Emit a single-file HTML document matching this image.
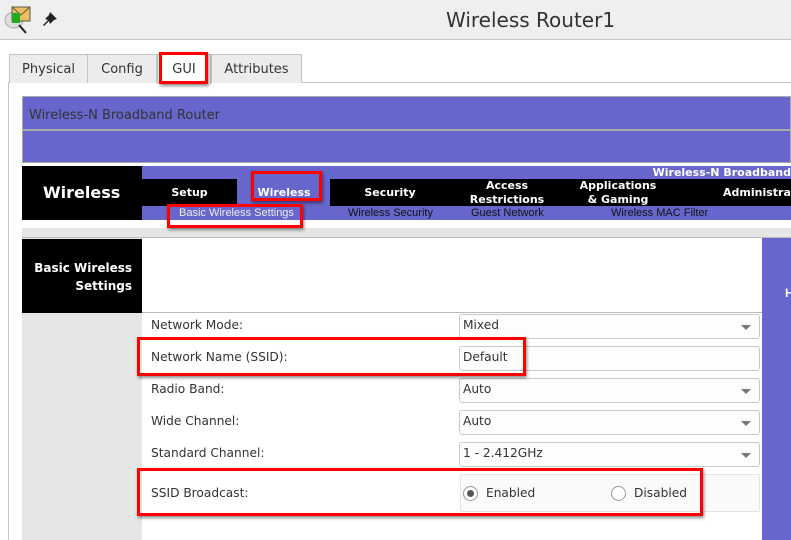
<!DOCTYPE html><html><head><style>
*{margin:0;padding:0;box-sizing:border-box}
body{width:791px;height:540px;overflow:hidden;background:#fff;font-family:"Liberation Sans",sans-serif;position:relative}
.a{position:absolute}
.ui{font-family:"DejaVu Sans","Liberation Sans",sans-serif}
.tab{position:absolute;top:54px;height:29px;border:1px solid #c4c4c4;border-bottom:none;background:#ececec;font-size:13px;color:#333;text-align:center;line-height:30px}
.red{position:absolute;border:3px solid #f00;box-shadow:1px 2px 3px rgba(0,0,0,.45)}
.lbl{position:absolute;left:151px;font-size:12.2px;color:#333}
.sel{position:absolute;left:459px;width:301px;height:25px;border:1px solid #c8c8c8;border-radius:3px;background:#fdfdfd;font-size:12.2px;color:#333;padding:3px 0 0 3px}
.sel.dd:after{content:"";position:absolute;right:8px;top:10px;border-left:5px solid transparent;border-right:5px solid transparent;border-top:5px solid #777}
.nav{position:absolute;color:#fff;font-weight:bold;font-size:11px;text-align:center;line-height:14px;font-family:"DejaVu Sans",sans-serif}
.sub{position:absolute;top:207px;font-size:11px;color:#111}
</style></head><body>
<div class="a" style="left:0;top:0;width:791px;height:40px;background:#efefef;border-bottom:1px solid #c8c8c8"></div>
<svg class="a" style="left:3px;top:5px" width="30" height="30"><ellipse cx="11" cy="15" rx="9" ry="8" fill="#ddd" stroke="#aaa"/><rect x="9" y="2" width="18" height="14" fill="#e8c060" stroke="#654"/><path d="M9 2 L18 10 L27 2" stroke="#654" fill="none"/><rect x="9" y="8" width="8" height="10" fill="#2a2"/><path d="M16 20 L23 28" stroke="#222" stroke-width="2"/></svg>
<svg class="a" style="left:41px;top:10px" width="18" height="18"><path d="M9 2 L16 9 L13 10 L9 14 L8 11 L3 16 L2 15 L7 10 L4 9 L8 5 Z" fill="#222"/></svg>
<div class="a ui" style="left:446px;top:8px;font-size:20px;color:#333">Wireless Router1</div>
<div class="a" style="left:8px;top:82px;width:783px;height:458px;border-left:1px solid #c4c4c4;border-top:1px solid #c4c4c4;background:#fff"></div>
<div class="tab ui" style="left:9px;width:79px">Physical</div>
<div class="tab ui" style="left:87px;width:70px">Config</div>
<div class="tab ui" style="left:157px;width:54px;background:#fff;height:30px">GUI</div>
<div class="tab ui" style="left:211px;width:91px">Attributes</div>
<div class="a" style="left:22px;top:96px;width:769px;height:67px;background:#6666cc;border:1px solid #aaa"></div>
<div class="a" style="left:23px;top:129px;width:768px;height:2px;background:#aaa"></div>
<div class="a ui" style="left:29px;top:108px;font-size:13px;color:#333">Wireless-N Broadband Router</div>
<div class="a" style="left:22px;top:166px;width:769px;height:54px;background:#6666cc"></div>
<div class="a" style="left:22px;top:166px;width:120px;height:54px;background:#000"></div>
<div class="a ui" style="left:43px;top:183px;font-size:16px;font-weight:bold;color:#fff">Wireless</div>
<div class="a" style="left:142px;top:179px;width:95px;height:27px;background:#000"></div>
<div class="a" style="left:330px;top:179px;width:461px;height:27px;background:#000"></div>
<div class="nav" style="left:600px;top:166px;width:191px;text-align:right">Wireless-N Broadband</div>
<div class="nav" style="left:142px;top:186px;width:95px">Setup</div>
<div class="nav" style="left:247px;top:186px;width:74px">Wireless</div>
<div class="nav" style="left:350px;top:186px;width:80px">Security</div>
<div class="nav" style="left:462px;top:179px;width:90px">Access<br>Restrictions</div>
<div class="nav" style="left:570px;top:179px;width:96px">Applications<br>&amp; Gaming</div>
<div class="nav" style="left:723px;top:186px;width:110px;text-align:left">Administration</div>
<div class="sub" style="left:179px;color:#eee">Basic Wireless Settings</div>
<div class="sub" style="left:348px">Wireless Security</div>
<div class="sub" style="left:471px">Guest Network</div>
<div class="sub" style="left:611px">Wireless MAC Filter</div>
<div class="a" style="left:22px;top:228px;width:769px;height:10px;background:#e6e6e6;border-bottom:1px solid #bbb"></div>
<div class="a" style="left:22px;top:238px;width:120px;height:302px;background:#e6e6e6"></div>
<div class="a" style="left:22px;top:239px;width:120px;height:74px;background:#000"></div>
<div class="a ui" style="left:22px;top:259px;width:110px;text-align:right;color:#fff;font-weight:bold;font-size:12px;line-height:18px">Basic Wireless<br>Settings</div>
<div class="a" style="left:142px;top:312px;width:620px;height:1px;background:#bbb"></div>
<div class="a" style="left:762px;top:238px;width:29px;height:302px;background:#6666cc"></div>
<div class="a" style="left:785px;top:286px;color:#fff;font-weight:bold;font-size:12px">H</div>
<div class="lbl ui" style="top:318px">Network Mode:</div>
<div class="lbl ui" style="top:350px">Network Name (SSID):</div>
<div class="lbl ui" style="top:382px">Radio Band:</div>
<div class="lbl ui" style="top:414px">Wide Channel:</div>
<div class="lbl ui" style="top:446px">Standard Channel:</div>
<div class="lbl ui" style="top:486px">SSID Broadcast:</div>
<div class="sel dd ui" style="top:314px">Mixed</div>
<div class="sel ui" style="top:346px">Default</div>
<div class="sel dd ui" style="top:378px">Auto</div>
<div class="sel dd ui" style="top:410px">Auto</div>
<div class="sel dd ui" style="top:442px">1 - 2.412GHz</div>
<div class="a" style="left:460px;top:474px;width:300px;height:38px;border:1px solid #e4e4e4;border-radius:2px;background:#fafafa"></div>
<div class="a" style="left:463px;top:486px;width:15px;height:15px;border:1px solid #999;border-radius:50%;background:#fff"><div class="a" style="left:3px;top:3px;width:7px;height:7px;border-radius:50%;background:#555"></div></div>
<div class="a ui" style="left:486px;top:486px;font-size:12.2px;color:#333">Enabled</div>
<div class="a" style="left:611px;top:486px;width:15px;height:15px;border:1px solid #999;border-radius:50%;background:#fff"></div>
<div class="a ui" style="left:634px;top:486px;font-size:12.2px;color:#333">Disabled</div>
<div class="red" style="left:159px;top:52px;width:49px;height:32px"></div>
<div class="red" style="left:251px;top:171px;width:71px;height:30px"></div>
<div class="red" style="left:167px;top:204px;width:136px;height:24px"></div>
<div class="red" style="left:137px;top:337px;width:389px;height:39px"></div>
<div class="red" style="left:137px;top:468px;width:566px;height:48px"></div>
</body></html>
